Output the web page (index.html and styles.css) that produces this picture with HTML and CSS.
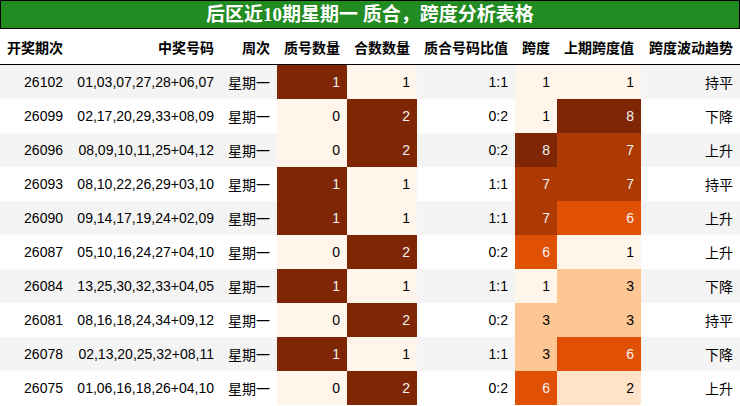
FILE: index.html
```html
<!DOCTYPE html>
<html lang="zh-CN">
<head>
<meta charset="utf-8">
<title>后区近10期星期一 质合，跨度分析表格</title>
<link rel="stylesheet" href="styles.css">
</head>
<body>
<div class="wrap">
  <div class="title">后区近10期星期一 质合，跨度分析表格</div>
  <table class="grid">
    <colgroup>
      <col class="w-issue"><col class="w-nums"><col class="w-week"><col class="w-prime"><col class="w-comp"><col class="w-ratio"><col class="w-span"><col class="w-prev"><col class="w-trend">
    </colgroup>
    <thead>
      <tr><th>开奖期次</th><th>中奖号码</th><th>周次</th><th>质号数量</th><th>合数数量</th><th>质合号码比值</th><th>跨度</th><th>上期跨度值</th><th>跨度波动趋势</th></tr>
    </thead>
    <tbody>
      <tr><td>26102</td><td>01,03,07,27,28+06,07</td><td>星期一</td><td class="hi">1</td><td class="lo">1</td><td>1:1</td><td class="lo">1</td><td class="lo">1</td><td>持平</td></tr>
      <tr><td>26099</td><td>02,17,20,29,33+08,09</td><td>星期一</td><td class="lo">0</td><td class="hi">2</td><td>0:2</td><td class="lo">1</td><td class="hi">8</td><td>下降</td></tr>
      <tr><td>26096</td><td>08,09,10,11,25+04,12</td><td>星期一</td><td class="lo">0</td><td class="hi">2</td><td>0:2</td><td class="hi">8</td><td class="s7">7</td><td>上升</td></tr>
      <tr><td>26093</td><td>08,10,22,26,29+03,10</td><td>星期一</td><td class="hi">1</td><td class="lo">1</td><td>1:1</td><td class="s7">7</td><td class="s7">7</td><td>持平</td></tr>
      <tr><td>26090</td><td>09,14,17,19,24+02,09</td><td>星期一</td><td class="hi">1</td><td class="lo">1</td><td>1:1</td><td class="s7">7</td><td class="s6">6</td><td>上升</td></tr>
      <tr><td>26087</td><td>05,10,16,24,27+04,10</td><td>星期一</td><td class="lo">0</td><td class="hi">2</td><td>0:2</td><td class="s6">6</td><td class="lo">1</td><td>上升</td></tr>
      <tr><td>26084</td><td>13,25,30,32,33+04,05</td><td>星期一</td><td class="hi">1</td><td class="lo">1</td><td>1:1</td><td class="lo">1</td><td class="s3">3</td><td>下降</td></tr>
      <tr><td>26081</td><td>08,16,18,24,34+09,12</td><td>星期一</td><td class="lo">0</td><td class="hi">2</td><td>0:2</td><td class="s3">3</td><td class="s3">3</td><td>持平</td></tr>
      <tr><td>26078</td><td>02,13,20,25,32+08,11</td><td>星期一</td><td class="hi">1</td><td class="lo">1</td><td>1:1</td><td class="s3">3</td><td class="s6">6</td><td>下降</td></tr>
      <tr><td>26075</td><td>01,06,16,18,26+04,10</td><td>星期一</td><td class="lo">0</td><td class="hi">2</td><td>0:2</td><td class="s6">6</td><td class="s2">2</td><td>上升</td></tr>
    </tbody>
  </table>
</div>
</body>
</html>
```
FILE: styles.css
```css
html, body {
  margin: 0;
  padding: 0;
  background: #ffffff;
}
.wrap {
  width: 740px;
}
.title {
  box-sizing: border-box;
  height: 29px;
  border: 1px solid #000;
  background: #228b22;
  color: #ffffff;
  font-family: "Liberation Serif", "Noto Sans CJK SC", serif;
  font-weight: bold;
  font-size: 19px;
  line-height: 27px;
  text-align: center;
}
.grid {
  width: 740px;
  table-layout: fixed;
  border-collapse: collapse;
  border-spacing: 0;
  font-family: "Liberation Sans", "Noto Sans CJK SC", sans-serif;
  font-size: 14px;
  color: #000;
}
.w-issue { width: 70px; }
.w-nums { width: 151px; }
.w-week { width: 56px; }
.w-prime { width: 70px; }
.w-comp { width: 70px; }
.w-ratio { width: 98px; }
.w-span { width: 42px; }
.w-prev { width: 84px; }
.w-trend { width: 99px; }
.grid th {
  height: 35px;
  padding: 0 7px;
  text-align: right;
  font-family: "Noto Sans CJK SC", sans-serif;
  font-weight: bold;
  font-size: 14px;
  white-space: nowrap;
  border-bottom: 1.5px solid #000;
  background: #fff;
}
.grid td {
  height: 34px;
  padding: 0 7px;
  text-align: right;
  white-space: nowrap;
  box-sizing: border-box;
}
.row-band,
.grid tbody tr:nth-child(odd) { background: #f4f4f4; }
.grid tbody tr:nth-child(even) { background: #ffffff; }
.grid td.lo { background: #fff5eb; color: #000; }
.grid td.hi { background: #7f2704; color: #f1f1f1; }
.grid td.s2 { background: #fee3c8; color: #000; }
.grid td.s3 { background: #fdc692; color: #000; }
.grid td.s6 { background: #e05106; color: #f1f1f1; }
.grid td.s7 { background: #ad3903; color: #f1f1f1; }
```
